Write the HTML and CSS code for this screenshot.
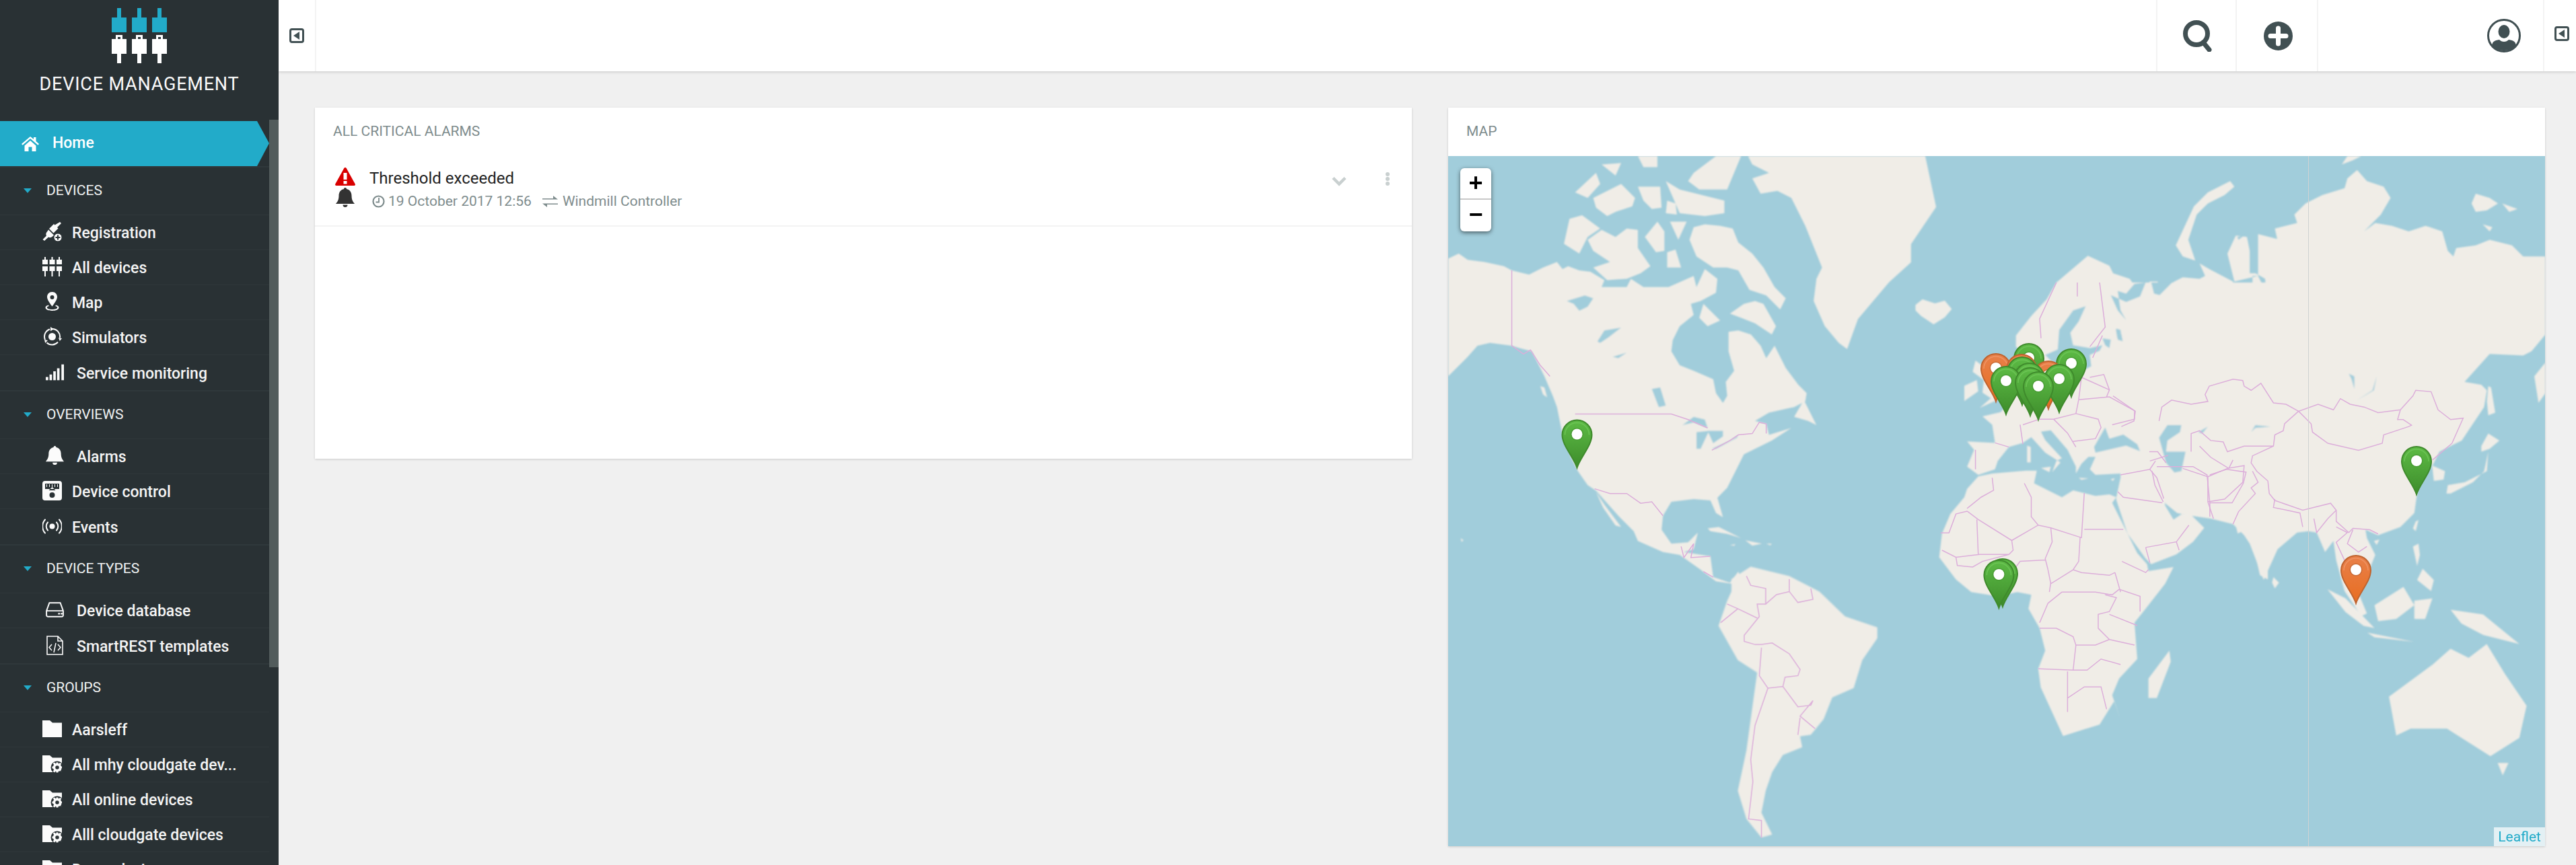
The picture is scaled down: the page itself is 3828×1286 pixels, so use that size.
FILE: index.html
```html
<!DOCTYPE html>
<html lang="en">
<head>
    <meta charset="UTF-8">
    <title>Device Management</title>
    <link rel="stylesheet" href="styles.css">
</head>
<body>
    <!-- Icon sprite -->
    <svg class="sprite" xmlns="http://www.w3.org/2000/svg">
        <symbol id="i-home" viewBox="0 0 26 24"><path d="M13 2 0 13l1.6 1.8L13 5l11.4 9.800L26 13l-4.500-3.900V3h-3.500v3L13 2zM4.500 15.500V24h6v-6.500h5V24h6v-8.500L13 8z"/></symbol>
        <symbol id="i-plug" viewBox="0 0 29 29"><path d="M26 0l2 2-6 6 1.500 1.500-7 7L10 10l7-7L18.500 4.500zM9 11.500l8 8-2 2c-2 2-4.500 2-6 1L3 28l-2.500-2 5.500-5.500c-1-1.500-1-4 1-6z"/><circle cx="23" cy="23" r="6" stroke="#293134" stroke-width="1"/><path d="M22 19.500h2v2.500h2.500v2H24v2.500h-2V24h-2.500v-2H22z" fill="#293134"/></symbol>
        <symbol id="i-devices" viewBox="0 0 29 29"><path d="M3 0h2v4h3v7H0V4h3zM13.500 0h2v4h3v7h-8V4h3zM24 0h2v4h3v7h-8V4h3zM0 14h8v7H5v8H3v-8H0zM10.500 14h8v7h-3v8h-2v-8h-3zM21 14h8v7h-3v8h-2v-8h-3z"/></symbol>
        <symbol id="i-map" viewBox="0 0 29 29"><path d="M14.500 0C10 0 7 3.500 7 7.500c0 4 4.500 10 7.500 14 3-4 7.500-10 7.500-14C22 3.500 19 0 14.500 0zm0 5a3 3 0 1 1 0 6 3 3 0 0 1 0-6z"/><path d="M9 19.500c-3 .8-4.500 2-4.500 3.800 0 3 4.500 4.700 10 4.700s10-1.700 10-4.700c0-1.800-1.500-3-4.500-3.800l-.8 1.500c2 .5 3 1.300 3 2.300 0 1.500-3 2.700-7.700 2.700s-7.700-1.200-7.700-2.700c0-1 1-1.800 3-2.300z"/></symbol>
        <symbol id="i-sim" viewBox="0 0 29 29"><circle cx="14.500" cy="14.500" r="5.500"/><path d="M4 19a11.500 11.500 0 0 1 7-15.500M14.500 3.100A11.500 11.500 0 0 1 26 16M23 22.500a11.500 11.500 0 0 1-16.500 1" fill="none" stroke="currentColor" stroke-width="2"/><path d="M12 0l5 3.200-5 3zM29 17l-5-1 1.800 5zM3 19l5 1-3.800 4z"/></symbol>
        <symbol id="i-signal" viewBox="0 0 29 25"><path d="M0 20h4v5H0zM6 16h4v9H6zM12 11h4v14h-4zM18 6h4v19h-4zM25 0h4v25h-4z"/></symbol>
        <symbol id="i-bell" viewBox="0 0 28 30"><path d="M14 0c1.300 0 2 .8 2 2 5 1 7.500 5 7.500 10 0 6 2 9 4.500 12H0c2.500-3 4.500-6 4.500-12 0-5 2.500-9 7.500-10 0-1.200.7-2 2-2zM10.500 25.500h7a3.500 3.500 0 0 1-7 0z"/></symbol>
        <symbol id="i-control" viewBox="0 0 29 29"><path fill-rule="evenodd" d="M4 0h21a4 4 0 0 1 4 4v21a4 4 0 0 1-4 4H4a4 4 0 0 1-4-4V4a4 4 0 0 1 4-4zM4 4v8h21V4zM14.500 9l5 5h-10zM14.500 17a4 4 0 1 0 0 8 4 4 0 0 0 0-8z"/><path d="M6 5h1v4H6zM10 5h1v4h-1zM14 5h1v4h-1zM18 5h1v4h-1zM22 5h1v4h-1z"/></symbol>
        <symbol id="i-events" viewBox="0 0 29 23"><circle cx="14.500" cy="11.500" r="4"/><g fill="none" stroke="currentColor" stroke-width="2" stroke-linecap="round"><path d="M8 5.500a9 9 0 0 0 0 12M21 5.500a9 9 0 0 1 0 12M4 1.500a15 15 0 0 0 0 20M25 1.500a15 15 0 0 1 0 20"/></g></symbol>
        <symbol id="i-hdd" viewBox="0 0 25 21"><path fill="none" stroke="currentColor" stroke-width="1.800" d="M5 1h15l4 11v6a2 2 0 0 1-2 2H3a2 2 0 0 1-2-2v-6zM1 12h23"/><path d="M17 15h2.500v2H17zM20.500 15H23v2h-2.500z"/></symbol>
        <symbol id="i-code" viewBox="0 0 25 29"><path fill="none" stroke="currentColor" stroke-width="1.600" d="M1 1h16l7 7v20H1zM17 1v7h7"/><path fill="none" stroke="currentColor" stroke-width="1.500" d="M8 13l-4 4.500L8 22M17 13l4 4.500L17 22M14 11l-3 14"/></symbol>
        <symbol id="i-folder" viewBox="0 0 29 25"><path d="M0 0h11l4 3.500h14V25H0z"/></symbol>
        <symbol id="i-folder-gear" viewBox="0 0 29 25"><path d="M0 0h11l4 3.500h14V25H0z"/><circle cx="22" cy="18" r="9.500" fill="#293134"/><circle cx="22" cy="18" r="4.500" fill="none" stroke="currentColor" stroke-width="3.500"/><path d="M20.500 10.500h3v3h-3zM20.500 22.500h3v3h-3zM14.500 16.500h3v3h-3zM26.500 16.500h3v3h-3zM15.500 12l2.500-1.500 2 2L18 15zM24 21l2-2 2.500 2L26 24zM26 11l2.500 1.500L26 15l-2-2zM18 21l2 2-2 2.500-2.500-2z"/></symbol>
        <symbol id="i-toggle" viewBox="0 0 22 22"><rect x="1.500" y="1.500" width="19" height="19" rx="2.500" fill="none" stroke="currentColor" stroke-width="3"/><path d="M15 5v12l-9-6z"/></symbol>
    </svg>

    <aside class="sidebar">
        <div class="brand">
            <svg class="logo" viewBox="0 0 82 82">
                <g fill="#22abc9"><path d="M8 0h6v14h8v22H0V14h8zM38 0h6v14h8v22H30V14h8zM68 0h6v14h8v22H60V14h8z"/></g>
                <g fill="#fff" fill-rule="evenodd"><path d="M6 40h10v6h6v22h-8v14H8V68H0V46h6zM9 43v3h4v-3zM36 40h10v6h6v22h-8v14h-6V68h-8V46h6zM39 43v3h4v-3zM66 40h10v6h6v22h-8v14h-6V68h-8V46h6zM69 43v3h4v-3z"/></g>
            </svg>
            <div class="brand-name">DEVICE MANAGEMENT</div>
        </div>

        <nav class="nav">
            <a class="nav-home"><svg class="ic-home"><use href="#i-home"/></svg>Home</a>

            <div class="nav-head"><span class="caret"></span>DEVICES</div>
            <a class="nav-row"><svg class="ic"><use href="#i-plug"/></svg>Registration</a>
            <a class="nav-row"><svg class="ic"><use href="#i-devices"/></svg>All devices</a>
            <a class="nav-row"><svg class="ic"><use href="#i-map"/></svg>Map</a>
            <a class="nav-row"><svg class="ic"><use href="#i-sim"/></svg>Simulators</a>
            <a class="nav-row wide"><svg class="ic"><use href="#i-signal"/></svg>Service monitoring</a>

            <div class="nav-head"><span class="caret"></span>OVERVIEWS</div>
            <a class="nav-row wide"><svg class="ic"><use href="#i-bell"/></svg>Alarms</a>
            <a class="nav-row"><svg class="ic"><use href="#i-control"/></svg>Device control</a>
            <a class="nav-row"><svg class="ic"><use href="#i-events"/></svg>Events</a>

            <div class="nav-head"><span class="caret"></span>DEVICE TYPES</div>
            <a class="nav-row wide"><svg class="ic"><use href="#i-hdd"/></svg>Device database</a>
            <a class="nav-row wide"><svg class="ic"><use href="#i-code"/></svg>SmartREST templates</a>

            <div class="nav-head"><span class="caret"></span>GROUPS</div>
            <a class="nav-row"><svg class="ic"><use href="#i-folder"/></svg>Aarsleff</a>
            <a class="nav-row"><svg class="ic"><use href="#i-folder-gear"/></svg>All mhy cloudgate dev...</a>
            <a class="nav-row"><svg class="ic"><use href="#i-folder-gear"/></svg>All online devices</a>
            <a class="nav-row"><svg class="ic"><use href="#i-folder-gear"/></svg>Alll cloudgate devices</a>
            <a class="nav-row"><svg class="ic"><use href="#i-folder"/></svg>Demo devices</a>
        </nav>
        <div class="scrollbar"></div>
    </aside>

    <div class="main">
        <header class="topbar">
            <div class="bar-cell cell-toggle"><svg class="ic-toggle"><use href="#i-toggle"/></svg></div>
            <div class="bar-fill"></div>
            <div class="bar-cell cell-action cell-search">
                <svg class="ic-search" viewBox="0 0 46 47"><circle cx="20" cy="20" r="16.500" fill="none" stroke="currentColor" stroke-width="7"/><path d="M30 33l9 11" fill="none" stroke="currentColor" stroke-width="7" stroke-linecap="round"/></svg>
            </div>
            <div class="bar-cell cell-action cell-add">
                <svg class="ic-plus" viewBox="0 0 43 43"><circle cx="21.500" cy="21.500" r="21.500" fill="currentColor"/><path d="M21.500 10v23M10 21.500h23" stroke="#fff" stroke-width="7" stroke-linecap="round"/></svg>
            </div>
            <div class="bar-cell cell-user">
                <svg class="ic-user" viewBox="0 0 50 50"><circle cx="25" cy="25" r="23.500" fill="none" stroke="currentColor" stroke-width="3"/><ellipse cx="25" cy="19" rx="8.500" ry="10" fill="currentColor"/><path d="M7 41c0-7 4-9 11-10 2 2 4 3 7 3s5-1 7-3c7 1 11 3 11 10-5 4-11 6-18 6s-13-2-18-6z" fill="currentColor"/></svg>
            </div>
            <div class="bar-cell cell-toggle-right"><svg class="ic-toggle"><use href="#i-toggle"/></svg></div>
        </header>

        <div class="dashboard">
            <section class="card card-alarms">
                <h2 class="card-title">All critical alarms</h2>
                <div class="alarm">
                    <div class="alarm-icons">
                        <svg class="ic-alert" viewBox="0 0 30 27"><path d="M15 0c.8 0 1.300.4 1.700 1.100l13 23.500c.6 1.200 0 2.400-1.400 2.400H1.700C.3 27-.3 25.800.3 24.600l13-23.500C13.700.4 14.200 0 15 0z" fill="#d90000"/><path d="M12.500 8h5v10h-5zM12.500 20h5v4.500h-5z" fill="#fff"/></svg>
                        <svg class="ic-alarm-bell"><use href="#i-bell"/></svg>
                    </div>
                    <div class="alarm-body">
                        <div class="alarm-title">Threshold exceeded</div>
                        <div class="alarm-meta">
                            <svg class="ic-clock" viewBox="0 0 19 19"><circle cx="9.500" cy="9.500" r="8" fill="none" stroke="currentColor" stroke-width="2.200"/><path d="M10 4v6.500H5.500" fill="none" stroke="currentColor" stroke-width="1.800"/></svg>
                            <span class="meta-date">19 October 2017 12:56</span>
                            <svg class="ic-swap" viewBox="0 0 23 17"><path d="M0 4h16V0l7 5.500H0zM23 13H7v4L0 11.500h23z"/></svg>
                            <span>Windmill Controller</span>
                        </div>
                    </div>
                    <svg class="ic-chevron" viewBox="0 0 22 15"><path d="M2 2.500l9 9 9-9" fill="none" stroke="currentColor" stroke-width="4.500"/></svg>
                    <svg class="ic-dots" viewBox="0 0 6 20"><circle cx="3" cy="3" r="3"/><circle cx="3" cy="10" r="3"/><circle cx="3" cy="17" r="3"/></svg>
                </div>
            </section>

            <section class="card card-map">
                <h2 class="card-title">Map</h2>
                <div class="map">
                    <svg class="map-svg" viewBox="0 0 1630 1026" preserveAspectRatio="none">
                        <defs>
                            <filter id="soft" x="0" y="0" width="100%" height="100%"><feGaussianBlur stdDeviation="0.8"/></filter>
                            <linearGradient id="grad-green" x1="0" y1="0" x2="0" y2="1"><stop offset="0" stop-color="#5dbb45"/><stop offset="1" stop-color="#3d8c2b"/></linearGradient>
                            <linearGradient id="grad-orange" x1="0" y1="0" x2="0" y2="1"><stop offset="0" stop-color="#e8804a"/><stop offset="1" stop-color="#e86d20"/></linearGradient>
                            <g id="pin-green">
                                <path d="M0 0C-5-16-22-33-22-49a22 22 0 0 1 44 0C22-33 5-16 0 0z" fill="url(#grad-green)" stroke="#3f8a2c" stroke-width="2"/>
                                <path d="M-18-49a18 18 0 0 1 36 0" fill="none" stroke="#6cc455" stroke-width="1.500"/>
                                <circle cy="-50" r="9.500" fill="#489c33"/><circle cy="-50" r="8" fill="#fff"/>
                            </g>
                            <g id="pin-orange">
                                <path d="M0 0C-5-16-22-33-22-49a22 22 0 0 1 44 0C22-33 5-16 0 0z" fill="url(#grad-orange)" stroke="#bf6430" stroke-width="2"/>
                                <path d="M-18-49a18 18 0 0 1 36 0" fill="none" stroke="#ee9464" stroke-width="1.500"/>
                                <circle cy="-50" r="9.500" fill="#c96a35"/><circle cy="-50" r="8" fill="#fff"/>
                            </g>
                        </defs>

                        <g filter="url(#soft)">
                        <g class="land">
                            <!-- North America, Greenland, arctic islands -->
                            <g transform="scale(.4146)">
                                <path d="M0 368 38 350 70 372 130 380 200 395 228 410 290 425 340 400 390 380 410 405 430 395 470 410 510 415 560 445 550 470 600 470 640 470 655 440 700 470 740 470 790 470 880 430 890 470 920 405 965 440 960 490 905 520 870 530 880 570 830 610 805 660 800 700 830 750 880 770 950 800 960 850 985 885 1000 860 995 810 1025 770 1005 700 1005 630 1040 625 1085 640 1120 680 1140 725 1170 680 1210 760 1255 820 1285 850 1280 880 1240 900 1150 920 1100 950 1120 955 1140 960 1150 1000 1230 975 1160 1020 1100 1050 1060 1070 1030 1130 1000 1190 965 1225 985 1295 960 1280 940 1235 880 1230 800 1240 770 1290 765 1340 800 1390 860 1385 895 1350 880 1410 845 1420 940 1435 950 1510 1010 1530 1040 1490 1060 1540 960 1525 900 1480 830 1430 770 1420 680 1380 665 1345 610 1290 530 1200 500 1180 465 1130 440 1080 410 1000 400 950 390 900 375 860 345 790 300 700 260 690 228 680 150 670 105 680 70 720 0 790z"/>
                                <path d="M435 225 480 212 545 260 500 290 470 350 415 315zM500 300 550 265 600 290 640 260 680 265 680 330 725 395 690 420 640 440 570 445 520 400 580 380 520 340zM705 290 750 235 775 270 775 340 745 345zM795 235 855 235 825 300zM785 345 815 335 835 400 785 400zM865 300 880 255 920 245 975 250 1020 260 1040 310 1090 350 1130 400 1170 470 1210 510 1190 550 1140 500 1080 480 1040 410 1000 400 950 400 890 360zM1010 565 1060 530 1100 520 1130 530 1175 610 1160 640 1100 600 1050 580zM900 580 915 530 975 590 930 610z"/>
                                <path d="M455 130 530 60 545 100 500 150zM520 150 620 100 670 150 660 180 600 200 570 215 530 185zM680 110 760 110 765 185 730 190 700 160zM780 90 830 120 990 160 990 205 920 215 830 205zM860 90 880 60 960 0 1050 0 1000 120 900 120zM680 0 750 0 750 40 700 40zM550 30 620 25 600 70zM785 160 815 170 820 210 780 205z"/>
                                <path d="M1075 0H1710L1749 183 1659 316 1659 381 1580 453 1469 584 1430 692 1400 670 1350 610 1310 520 1320 440 1340 400 1320 350 1280 250 1230 150 1180 125 1120 135 1090 80 1150 60 1090 30z"/>
                                <path d="M930 1335 970 1330 1050 1370 1000 1355 940 1345zM1065 1378 1125 1390 1090 1397zM1010 1395 1030 1392 1025 1398zM1140 1390 1160 1390 1155 1396zM530 1205 560 1250 620 1330 600 1325 555 1260zM1240 935 1275 875 1320 965 1290 950zM330 825 345 830 355 865 340 855zM45 1370 55 1378 48 1384z"/>
                            </g>
                            <!-- South America -->
                            <g transform="translate(-252 328) scale(.6378 .463)">
                                <path d="M1055 650 1100 610 1190 640 1260 690 1320 770 1395 805 1395 840 1360 910 1340 1000 1290 1030 1270 1100 1240 1150 1215 1155 1220 1190 1175 1215 1150 1270 1135 1330 1125 1400 1150 1470 1125 1480 1090 1420 1070 1330 1090 1200 1110 1000 1115 950 1070 910 1025 800 1045 720 1055 690z"/>
                            </g>
                            <!-- Europe, west Asia, Africa -->
                            <g transform="translate(568 188) scale(.4146)">
                                <path d="M810 0 923 -96 1000 -60 1013 -34 1013 0H1568V1065L1540 1050 1500 880 1460 900 1450 860 1400 850 1290 830 1250 820 1230 800 1195 775 1200 800 1230 850 1260 830 1295 835 1340 880 1300 930 1240 975 1150 1010 1130 990 1065 900 1025 780 1025 770 1040 700 1040 685 950 690 930 670 950 625 925 625 900 650 880 685 880 660 850 600 790 530 755 535 770 565 830 630 810 640 795 680 825 645 770 610 720 555 690 575 640 590 600 640 590 670 530 690 490 660 515 600 490 570 590 575 580 510 545 480 610 465 650 420 690 340 740 300 730 260 690 255 665 230 665 190 720 120 775 60z"/>
                                <path d="M530 695 580 685 700 675 740 675 730 720 790 750 830 770 870 745 950 765 1000 760 1025 770 1010 790 1045 860 1100 970 1135 1010 1140 1035 1230 1020 1200 1080 1130 1170 1090 1220 1100 1350 1035 1420 1010 1480 1040 1568 1018 1500 965 1585 834 1626 754 1452 745 1385 770 1320 750 1240 710 1170 720 1120 670 1110 600 1125 505 1110 450 1065 390 985 400 900 430 830 480 770 490 740z"/>
                                <path d="M520 280 560 310 575 370 600 420 535 450 575 415 545 395 550 350 510 320zM480 370 525 350 530 390 480 425zM305 80 330 60 375 75 410 65 435 95 410 125 370 150 325 120 305 100zM705 585 718 590 718 645 705 645zM755 665 790 660 785 680zM890 700 925 702 900 708zM1005 705 1020 702 1012 712zM1140 1420 1215 1320 1220 1360 1170 1490 1140 1490z"/>
                            </g>
                            <!-- Asia -->
                            <g transform="translate(988 0) scale(.4146)">
                                <path d="M0 420 60 440 95 490 60 520 80 540 130 510 150 500 130 450 160 450 165 490 220 450 250 435 310 440 330 430 310 385 345 405 430 450 430 510 470 515 500 480 500 430 520 430 550 490 545 440 510 420 490 420 490 340 480 290 440 285 410 350 435 450 520 430 520 280 600 300 620 400 600 350 580 260 660 240 650 210 690 170 750 140 830 115 840 80 875 50 910 90 970 110 995 150 960 210 900 270 860 300 940 240 1000 250 1060 270 1120 250 1180 270 1200 340 1220 360 1230 330 1300 320 1350 300 1430 320 1470 360 1550 360 1550 640 1500 700 1470 715 1350 710 1260 810 1320 820 1340 840 1330 900 1290 960 1250 1020 1220 1035 1170 1060 1145 1110 1190 1130 1185 1160 1150 1165 1145 1120 1140 1100 1090 1130 1090 1210 1080 1280 1030 1330 950 1360 905 1340 910 1370 940 1430 920 1480 880 1450 860 1440 850 1500 880 1568 910 1640 890 1650 830 1560 800 1450 790 1380 760 1420 730 1350 700 1345 660 1350 590 1410 540 1520 490 1390 470 1360 430 1320 350 1300 280 1290 230 1280 180 1240 140 1130 0 1100z"/>
                                <path d="M225 320 290 180 340 130 420 90 435 110 400 140 340 170 300 210 270 300 295 375 250 360zM820 30 840 0 890 0 860 15zM1285 170 1300 135 1350 150 1380 170 1340 195 1300 200zM1395 170 1450 190 1420 200zM1325 245 1360 255 1350 270zM1345 825 1355 830 1370 920 1345 930 1340 880zM1320 1040 1345 995 1385 1020 1350 1050 1320 1060zM1345 1060 1340 1130 1260 1170 1200 1180 1195 1210 1210 1210 1290 1170 1330 1130zM1085 1310 1095 1305 1085 1345 1075 1335zM935 1380 955 1375 945 1395zM1075 1400 1095 1390 1100 1430 1090 1470zM1110 1480 1150 1520 1140 1560 1090 1520zM575 1510 595 1530 580 1550 570 1530zM1510 790 1550 740V850L1525 885z"/>
                            </g>
                            <!-- South east Asia, Australia -->
                            <g transform="translate(-12 -12) scale(1.0764 .6798)">
                                <path d="M1225 965 1250 985 1290 1050 1275 1045 1250 1015zM1290 1000 1330 960 1345 1000 1320 1030 1295 1035zM1280 1060 1345 1080 1290 1070zM1345 990 1370 985 1360 1030 1345 1030zM1395 1010 1440 1020 1490 1085 1440 1065 1410 1040zM1310 1200 1370 1130 1395 1095 1420 1115 1445 1085 1470 1150 1500 1220 1490 1290 1450 1330 1420 1300 1390 1270 1340 1270 1320 1285zM1460 1345 1475 1345 1467 1372z"/>
                            </g>
                        </g>

                        <g class="water">
                            <g transform="scale(.4146)">
                                <path d="M425 520 490 500 520 510 500 540 470 555 450 530zM535 665 560 625 620 615 575 650 545 670zM730 835 760 830 780 895 755 900zM590 720 640 705 610 725zM840 965 880 935 920 945 930 975 880 955zM890 990 935 985 905 1050 890 1050zM930 985 985 985 985 1005 950 1030zM945 1050 1010 1020 1040 1000 1035 1010 960 1050z"/>
                            </g>
                            <g transform="translate(568 188) scale(.4146)">
                                <path d="M815 240 820 170 870 100 915 85 890 140 860 180 870 225 930 235 975 225 965 245 930 260 935 300 900 320 850 300 800 290 770 260zM945 590 985 520 1000 560 1050 545 1100 580 1110 605 1060 585 950 610zM1005 45 1060 70 1110 50 1130 0 1090 5 1060 40 1030 30 1040 100 1060 135 1030 100zM1150 0 1225 0 1180 45 1160 40zM975 200 1005 205 1000 235 985 225zM1025 165 1040 170 1045 210 1030 205z"/>
                            </g>
                            <g transform="translate(988 0) scale(.4146)">
                                <path d="M165 1010 195 965 245 965 240 990 195 1020 190 1060 260 1060 245 1130 220 1135 190 1100zM875 875 930 840 945 790 935 840zM495 990 510 965 565 970 510 975zM305 990 340 970 320 995zM845 780 865 790 865 835 855 800zM10 620 30 640 35 665 15 650zM445 290 470 285 450 300z"/>
                            </g>
                        </g>
                        </g>

                        <g class="borders">
                            <g transform="scale(.4146)">
                                <path d="M228 410V680L270 710 295 695 330 750 365 790M455 925H800L860 945 930 975M945 1055 1010 1020 1040 1000 1090 995 1115 955 1140 960 1140 995M525 1193 580 1210 640 1210 690 1245 730 1240 770 1290M835 1400 845 1440 880 1390 870 1440 940 1435M915 1490 950 1510"/>
                            </g>
                            <g transform="translate(-252 328) scale(.6378 .463)">
                                <path d="M1090 640 1100 670 1135 680 1135 730 1115 730 1120 770 1085 830 1085 850 1110 860 1125 860M1030 790 1070 745 1045 730M1070 745 1115 775M1125 860 1150 855 1190 890 1215 940 1210 960 1180 965 1175 995M1125 870 1120 960 1140 1000 1175 995 1210 1060 1240 1055 1245 1040 1215 1090 1250 1130M1140 1000 1110 1120 1100 1230 1105 1300 1095 1420 1125 1425 1125 1480M1190 650V690L1160 700 1135 730M1190 690 1210 725 1245 715 1240 680M1215 1095 1210 1150"/>
                            </g>
                            <g transform="translate(568 188) scale(.4146)">
                                <path d="M490 820 530 850 650 925 745 870 790 880 900 915 910 755M910 885H1050M895 915 890 1000 870 1030M650 925 655 960 640 975 530 975 525 850M745 870 720 840 720 770 695 720M580 700 585 745 540 770 490 810M790 880 795 930 770 990 780 1030M400 960 450 985 535 975M395 898H425L450 830 490 820M450 985 455 1015 510 1020 545 1000 640 975M770 995 680 1000 650 1040M780 1030 790 1080 870 1030 900 1040 1000 1050 1020 1040M790 1075 785 1110M830 1110 780 1150 750 1220M830 1110H950L1010 1120 1035 1100 1110 1125V1180M1045 1000 1130 1040 1140 1030M1020 1040 1040 1110M985 1120 1025 1130 1000 1180 960 1190 960 1240 1000 1280 950 1300 880 1300M750 1240 810 1240 870 1270 880 1300 870 1390 745 1385M870 1390 920 1390 970 1350 1040 1370M850 1395V1540M850 1490 910 1450 970 1450 990 1530M1000 1190 1100 1230M1000 1280 1090 1300"/>
                                <path d="M690 510 750 490 800 490 880 470M680 510 690 580M800 490 850 540 880 590M880 470 960 490 970 520 950 560 870 570M880 470 890 420 1000 410 1090 460 1090 490 1010 510M890 420 900 340 1000 385 990 410M1000 385 980 330 930 340M975 190 940 270M965 0 985 160 930 230M885 0V50M810 0 750 130 755 200M520 600V670M590 575 640 590"/>
                                <path d="M1040 690 1145 670 1170 700 1195 775M1145 670 1165 640M1145 640 1210 620M1030 750 1050 770 1190 790M1130 950 1240 930 1250 960M1240 930 1285 870M1130 950 1145 1005M1170 660 1300 660 1350 690 1360 790 1360 840M1360 690 1420 670 1490 680 1480 720 1440 790 1360 790"/>
                            </g>
                            <g transform="translate(988 0) scale(.4146)">
                                <path d="M0 860 80 915 75 950 30 970M165 950 175 900 210 875 280 890 340 880 330 855 345 825 430 800 465 805 470 825 495 840 530 815 575 885 620 890 665 915 735 890 790 910 815 870 850 890 900 900 950 920 1030 910 1075 860 1085 840 1140 845 1165 910 1210 945 1255 940 1215 1030"/>
                                <path d="M665 915 710 960 715 990 770 1030 880 1055 965 1030 970 1000 1060 970 1070 965 1040 945 1020 945 1030 910M665 915 615 960 610 985 580 1000 575 1040 500 1075 495 1100 515 1130 555 1165 560 1210 580 1235 680 1270 780 1245 800 1270 800 1310 845 1350 860 1335 920 1340 950 1355"/>
                                <path d="M280 1060V995L310 985 350 1020 395 1025 410 1060 470 1040 575 1040M310 1040 350 1080 415 1120 430 1090M130 1060 160 1060 190 1100M140 1130 150 1180 180 1240M250 1120 340 1150 340 1240 360 1300M340 1150 410 1120 470 1110 465 1170 400 1230 340 1240M500 1130 520 1170 495 1190 510 1210 450 1275 430 1320M580 1230 575 1260 670 1280 680 1330M720 1300 730 1350 770 1300 800 1270M800 1330 840 1350 800 1385 830 1450 850 1500M860 1340 840 1390 880 1420 910 1400M1145 1090 1215 1030"/>
                            </g>
                        </g>

                        <rect class="seam" x="1278" width="1" height="1026"/>

                        <use href="#pin-green" x="191.500" y="463.500"/>
                        <use href="#pin-green" x="863" y="350"/>
                        <use href="#pin-green" x="926" y="358"/>
                        <use href="#pin-orange" x="814" y="365"/>
                        <use href="#pin-orange" x="852" y="366"/>
                        <use href="#pin-green" x="853" y="370"/>
                        <use href="#pin-orange" x="892" y="376"/>
                        <use href="#pin-green" x="863.600" y="379"/>
                        <use href="#pin-green" x="908" y="381"/>
                        <use href="#pin-green" x="829" y="384"/>
                        <use href="#pin-green" x="865" y="386"/>
                        <use href="#pin-green" x="877" y="392"/>
                        <use href="#pin-green" x="824" y="670"/>
                        <use href="#pin-green" x="818.400" y="672"/>
                        <use href="#pin-green" x="1439" y="503"/>
                        <use href="#pin-orange" x="1349" y="665"/>
                    </svg>

                    <div class="zoom-control">
                        <a class="zoom-btn">+</a>
                        <a class="zoom-btn">&minus;</a>
                    </div>
                    <div class="attribution">Leaflet</div>
                </div>
            </section>
        </div>
    </div>
</body>
</html>
```

FILE: styles.css
```css
* {
    box-sizing: border-box;
    margin: 0;
    padding: 0;
}
body {
    font-family: Roboto, "Liberation Sans", sans-serif;
    background-color: #f0f0f0;
    display: flex;
    height: 1286px;
    overflow: hidden;
}
.sprite {
    display: none;
}

/* Sidebar */
.sidebar {
    position: relative;
    width: 414px;
    flex: none;
    height: 100%;
    overflow: hidden;
    background-color: #293134;
    color: #fff;
}
.brand {
    height: 180px;
    padding-top: 12px;
    display: flex;
    flex-direction: column;
    align-items: center;
}
.logo {
    width: 82px;
    height: 82px;
    display: block;
}
.brand-name {
    margin-top: 14px;
    font-size: 27px;
    line-height: 34px;
    letter-spacing: .8px;
    color: #fafafa;
}
.nav {
    margin-right: 14px;
    font-size: 23px;
}
.nav-home {
    display: flex;
    align-items: center;
    height: 67px;
    padding: 0 0 2px 32px;
    background-color: #22abc9;
    font-weight: 500;
    clip-path: polygon(0 0, 382px 0, 400px 33px, 382px 100%, 0 100%);
}
.ic-home {
    width: 26px;
    height: 24px;
    margin-right: 20px;
    fill: #fff;
}
.nav-head {
    display: flex;
    align-items: center;
    height: 73px;
    padding: 0 0 2px 35px;
    border-top: 2px solid #2f383b;
    border-bottom: 1px solid #2f373a;
    font-size: 21px;
    color: #f0f2f2;
}
.caret {
    width: 0;
    height: 0;
    margin-right: 22px;
    border-left: 6px solid transparent;
    border-right: 6px solid transparent;
    border-top: 7px solid #22abc9;
}
.nav-row {
    display: flex;
    align-items: center;
    height: 52px;
    padding: 2px 0 0 63px;
    border-bottom: 1px solid #2f373a;
    font-weight: 500;
    color: #f5f5f5;
    white-space: nowrap;
}
.nav-row:has(+ .nav-head) {
    border-bottom: none;
}
.nav-row.wide {
    padding-left: 68px;
}
.ic {
    width: 29px;
    height: 29px;
    margin: -4px 15px 0 0;
    fill: #fbfbfb;
    color: #fbfbfb;
    flex: none;
}
.nav-row.wide .ic {
    width: 27px;
    margin-right: 19px;
}
.scrollbar {
    position: absolute;
    top: 178px;
    right: 0;
    width: 14px;
    height: 814px;
    background-color: #525c5c;
}

/* Top bar */
.main {
    flex: 1;
    min-width: 0;
}
.topbar {
    display: flex;
    height: 106px;
    background-color: #fff;
    color: #415053;
    box-shadow: 0 1px 4px rgba(0, 0, 0, 0.18);
}
.bar-cell {
    display: flex;
    align-items: center;
    justify-content: center;
    height: 100%;
    border-right: 2px solid #f3f3f3;
}
.bar-fill {
    flex: 1;
    border-right: 2px solid #f3f3f3;
}
.cell-toggle {
    width: 56px;
}
.cell-action {
    width: 118px;
}
.cell-search {
    padding-left: 6px;
}
.cell-add {
    width: 121px;
    padding-left: 3px;
}
.cell-user {
    width: 336px;
    padding-left: 218px;
}
.cell-toggle-right {
    width: 47px;
    border-right: none;
    padding: 0 0 7px 4px;
}
.ic-toggle {
    width: 22px;
    height: 22px;
    fill: currentColor;
    color: #415053;
}
.ic-search {
    width: 46px;
    height: 47px;
}
.ic-plus {
    width: 43px;
    height: 43px;
}
.ic-user {
    width: 50px;
    height: 50px;
}

/* Cards */
.dashboard {
    display: grid;
    grid-template-columns: 1630px 1630px;
    gap: 54px;
    align-items: start;
    padding: 54px 0 0 54px;
}
.card {
    background-color: #fff;
    box-shadow: 0 1px 3px rgba(0, 0, 0, 0.16);
}
.card-alarms {
    height: 522px;
}
.card-map {
    height: 1098px;
    display: flex;
    flex-direction: column;
}
.card-title {
    height: 72px;
    line-height: 70px;
    padding-left: 27px;
    font-size: 21px;
    font-weight: 400;
    color: #7e8c8d;
    text-transform: uppercase;
}
.alarm {
    display: flex;
    height: 105px;
    padding: 17px 33px 0 30px;
    border-bottom: 2px solid #f3f3f3;
}
.alarm-icons {
    width: 51px;
    flex: none;
}
.ic-alert {
    display: block;
    width: 30px;
    height: 27px;
}
.ic-alarm-bell {
    display: block;
    width: 28px;
    height: 30px;
    margin: 3px 0 0 1px;
    fill: #333;
}
.alarm-body {
    flex: 1;
    padding-top: 2px;
}
.alarm-title {
    font-size: 24px;
    line-height: 28px;
    color: #222;
}
.alarm-meta {
    display: flex;
    align-items: center;
    margin-top: 6px;
    padding-left: 4px;
    font-size: 21px;
    line-height: 28px;
    color: #7e8c8d;
}
.ic-clock {
    width: 19px;
    height: 19px;
    margin-right: 5px;
}
.meta-date {
    margin-right: 16px;
}
.ic-swap {
    width: 23px;
    height: 17px;
    margin-right: 7px;
    fill: currentColor;
}
.ic-chevron {
    width: 22px;
    height: 15px;
    margin: 13px 58px 0 0;
    color: #c9d0d0;
}
.ic-dots {
    width: 6px;
    height: 20px;
    margin-top: 7px;
    fill: #c9d0d0;
}

/* Map */
.map {
    position: relative;
    flex: 1;
    background-color: #a1cddb;
    overflow: hidden;
}
.map-svg {
    display: block;
    width: 100%;
    height: 100%;
}
.land {
    fill: #f0ede7;
}
.water {
    fill: #a1cddb;
}
.borders {
    fill: none;
    stroke: #dcaeda;
    stroke-width: 1.500;
}
.borders path {
    vector-effect: non-scaling-stroke;
}
.seam {
    fill: #cfd2d2;
}
.zoom-control {
    position: absolute;
    top: 18px;
    left: 18px;
    width: 46px;
    background-color: #fff;
    border-radius: 6px;
    box-shadow: 0 2px 6px rgba(0, 0, 0, 0.55);
}
.zoom-btn {
    display: block;
    height: 47px;
    text-align: center;
    font-family: "Liberation Sans", sans-serif;
    font-size: 36px;
    font-weight: 700;
    line-height: 44px;
    color: #000;
}
.zoom-btn:first-child {
    border-bottom: 2px solid #c8c8c8;
}
.attribution {
    position: absolute;
    right: 0;
    bottom: 0;
    height: 28px;
    padding: 0 6px;
    background-color: rgba(255, 255, 255, 0.7);
    font-size: 21px;
    line-height: 28px;
    color: #22abc9;
}
```
